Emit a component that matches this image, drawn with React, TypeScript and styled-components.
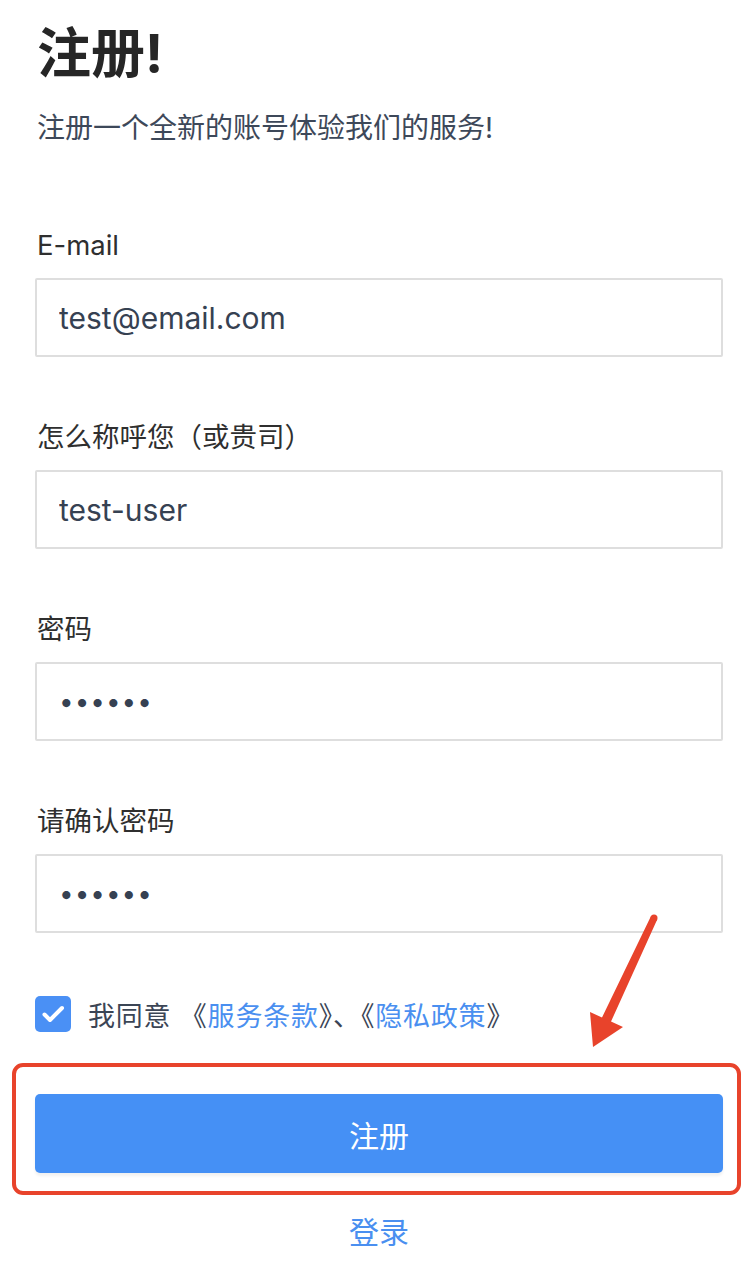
import React from 'react';
import styled, { createGlobalStyle } from 'styled-components';

const GlobalStyle = createGlobalStyle`
  html, body {
    margin: 0;
    padding: 0;
    background: #ffffff;
  }

  body {
    font-family: 'Inter', 'Noto Sans CJK SC', sans-serif;
    -webkit-font-smoothing: antialiased;
  }

  * {
    box-sizing: border-box;
  }
`;

const Page = styled.div`
  position: relative;
  width: 748px;
  min-height: 1284px;
  padding: 22px 25px 0 35px;
`;

const Title = styled.h1`
  margin: 0;
  font-size: 54px;
  line-height: 64px;
  font-weight: 700;
  color: #262626;
  padding-left: 2px;
`;

const Subtitle = styled.p`
  margin: 24px 0 0;
  padding-left: 2px;
  font-size: 28px;
  line-height: 36px;
  color: #3d4859;
`;

const Form = styled.form`
  display: flex;
  flex-direction: column;
  margin-top: 81px;
`;

const Field = styled.div`
  display: flex;
  flex-direction: column;
  gap: 15px;

  & + & {
    margin-top: 62px;
  }
`;

const Label = styled.label`
  padding-left: 2px;
  font-size: 27.5px;
  line-height: 36px;
  color: #2f2f2f;
`;

const Input = styled.input`
  width: 688px;
  height: 79px;
  padding: 0 22px;
  border: 2px solid #dedede;
  border-radius: 2px;
  background: #fff;
  font-family: 'Inter', 'Noto Sans CJK SC', sans-serif;
  font-size: 30px;
  color: #364152;
  outline: none;

  &[type='password'] {
    font-size: 26px;
    letter-spacing: 1px;
  }
`;

const AgreeRow = styled.div`
  display: flex;
  align-items: center;
  gap: 17px;
  margin-top: 63px;
  height: 36px;
  font-size: 27px;
  letter-spacing: 0.8px;
  color: #3b4555;
`;

const Check = styled.span`
  display: flex;
  align-items: center;
  justify-content: center;
  width: 36px;
  height: 36px;
  border-radius: 5px;
  background: #4a90f5;

  svg {
    display: block;
  }
`;

const Link = styled.a<{ $big?: boolean }>`
  color: #4a8ff0;
  text-decoration: none;
  font-size: ${(p) => (p.$big ? '30px' : 'inherit')};
`;

const Highlight = styled.div`
  position: relative;
  margin-top: 62px;

  &::after {
    content: '';
    position: absolute;
    top: -31px;
    left: -23px;
    right: -18px;
    bottom: -22px;
    border: 4px solid #e8432b;
    border-radius: 11px;
    pointer-events: none;
  }
`;

const SubmitButton = styled.button`
  display: flex;
  align-items: center;
  justify-content: center;
  width: 688px;
  height: 79px;
  border: none;
  border-radius: 5px;
  background: #4590f5;
  color: #ffffff;
  font-family: 'Inter', 'Noto Sans CJK SC', sans-serif;
  font-size: 30px;
  box-shadow: 0 3px 3px rgba(0, 0, 0, 0.06);
`;

const LoginRow = styled.div`
  display: flex;
  justify-content: center;
  margin-top: 39px;
  width: 688px;
  line-height: 40px;
`;

const Arrow = styled.svg`
  position: absolute;
  left: 585px;
  top: 910px;
  width: 80px;
  height: 145px;
  pointer-events: none;
`;

const App = () => (
  <>
    <GlobalStyle />
    <Page>
      <Title>注册!</Title>
      <Subtitle>注册一个全新的账号体验我们的服务!</Subtitle>
      <Form onSubmit={(e) => e.preventDefault()}>
        <Field>
          <Label>E-mail</Label>
          <Input type="text" defaultValue="test@email.com" />
        </Field>
        <Field>
          <Label>怎么称呼您（或贵司）</Label>
          <Input type="text" defaultValue="test-user" />
        </Field>
        <Field>
          <Label>密码</Label>
          <Input type="password" defaultValue="123456" />
        </Field>
        <Field>
          <Label>请确认密码</Label>
          <Input type="password" defaultValue="123456" />
        </Field>
        <AgreeRow>
          <Check>
            <svg width="24" height="24" viewBox="0 0 24 24" fill="none">
              <path d="M3.5 12.5l5.5 5.5L21 6" stroke="#fff" strokeWidth="4" strokeLinecap="round" strokeLinejoin="round" />
            </svg>
          </Check>
          <span>
            我同意 《<Link href="#">服务条款</Link>》、《<Link href="#">隐私政策</Link>》
          </span>
        </AgreeRow>
        <Highlight>
          <SubmitButton type="submit">注册</SubmitButton>
        </Highlight>
        <LoginRow>
          <Link href="#" $big>登录</Link>
        </LoginRow>
      </Form>
      <Arrow viewBox="585 910 80 145">
        <polygon
          points="650.8,916.5 657.2,919.5 611,1021.6 623,1027 593,1047 590,1012 602,1017.4"
          fill="#e8432b"
        />
        <circle cx="654" cy="918" r="3.5" fill="#e8432b" />
      </Arrow>
    </Page>
  </>
);

export default App;
